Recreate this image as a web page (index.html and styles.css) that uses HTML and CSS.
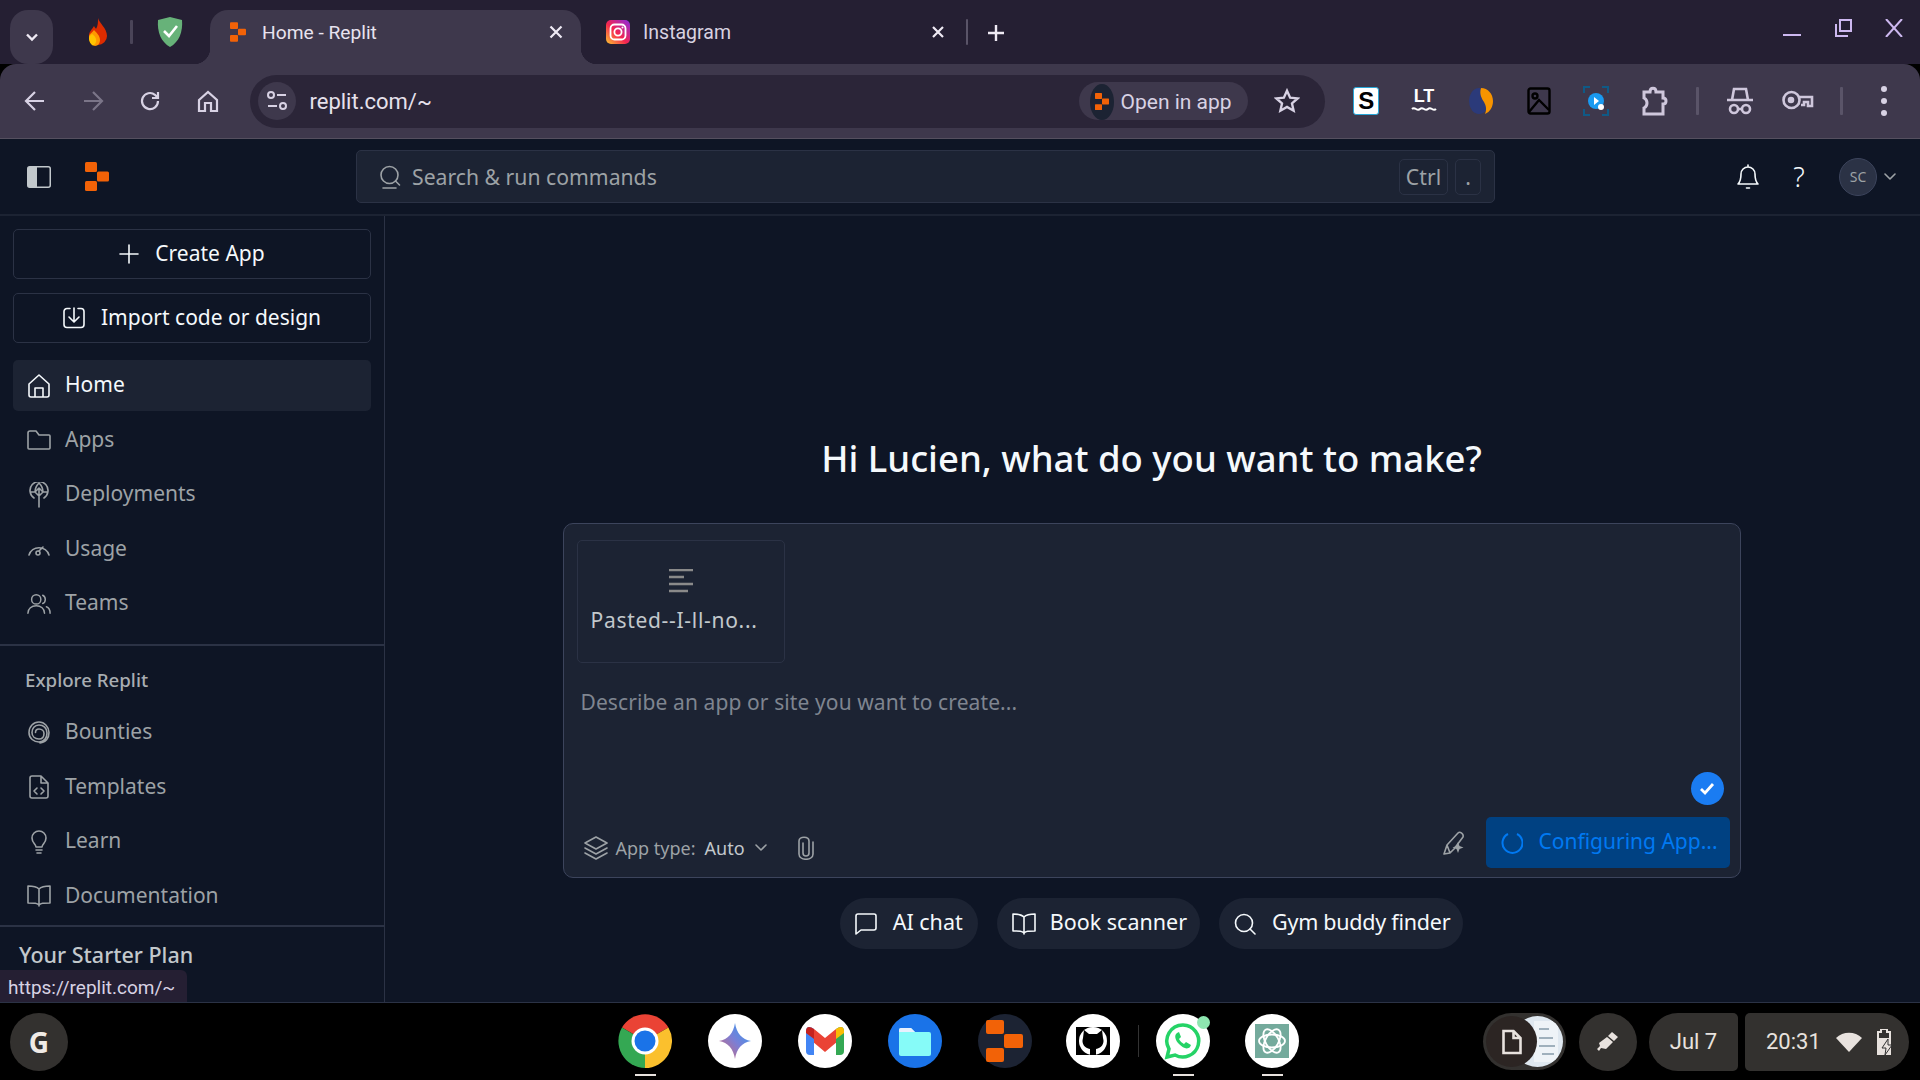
FILE: index.html
```html
<!DOCTYPE html>
<html lang="en">
<head>
<meta charset="utf-8">
<title>Home - Replit</title>
<link rel="stylesheet" href="styles.css">
</head>
<body>
<div class="tabstrip">
  <div class="tabsearch"><svg width="16" height="16" viewBox="0 0 16 16" class="st2"><path d="M3 5.500l5 5 5-5"/></svg></div>
  <div class="pinned first"><svg width="22" height="30" viewBox="0 0 22 30"><path d="M11 1c1 5 9 10 9 18a9 9 0 0 1-18 0c0-5 3-6 5-10 1 2 2 2 2 3 2-3 2-7 2-11z" fill="#dd2c00"/><path d="M7 13c3 3 6 6 6 10 0 3-2 6-5 6-4-1-6-5-6-9 0-3 3-4 5-7z" fill="#ff9800"/><path d="M5 17c3 2 5 5 4 8-1 3-3 4-4 3-2-2-3-4-3-7 0-2 2-3 3-4z" fill="#ffc400"/></svg></div>
  <span class="tabsep"></span>
  <div class="pinned"><svg width="26" height="30" viewBox="0 0 26 30"><path d="M13 0l12 3c1 12-3 22-12 27C4 25 0 15 1 3z" fill="#67b279"/><path d="M7 14l5 5 8-10" fill="none" stroke="#fff" stroke-width="2.600"/></svg></div>
  <div class="tab active">
    <svg width="16" height="22" viewBox="0 0 24 29" class="tabicon"><rect width="12" height="10" rx="1.500" fill="#f26207"/><rect x="12" y="9.500" width="12" height="10" rx="1.500" fill="#f26207"/><rect y="19" width="12" height="10" rx="1.500" fill="#f26207"/></svg>
    <span class="tabtitle">Home - Replit</span>
    <svg width="14" height="14" viewBox="0 0 14 14" class="st2 tabclose"><path d="M1.500 1.500l11 11M12.500 1.500l-11 11"/></svg>
  </div>
  <div class="tab">
    <svg width="24" height="26" viewBox="0 0 24 24" class="tabicon"><defs><linearGradient id="ig" x1="0" y1="1" x2="1" y2="0"><stop offset="0" stop-color="#fdc830"/><stop offset=".45" stop-color="#f5254f"/><stop offset="1" stop-color="#8a2be2"/></linearGradient></defs><rect width="24" height="24" rx="5" fill="url(#ig)"/><rect x="4.500" y="4.500" width="15" height="15" rx="4" fill="none" stroke="#fff" stroke-width="1.800"/><circle cx="12" cy="12" r="3.600" fill="none" stroke="#fff" stroke-width="1.800"/><circle cx="16.500" cy="7.500" r="1" fill="#fff"/></svg>
    <span class="tabtitle dim">Instagram</span>
    <svg width="14" height="14" viewBox="0 0 14 14" class="st2 tabclose"><path d="M2 2l10 10M12 2L2 12"/></svg>
  </div>
  <span class="tabsep narrow"></span>
  <svg width="18" height="18" viewBox="0 0 18 18" class="st2 newtab"><path d="M9 1v16M1 9h16"/></svg>
  <div class="winctl">
    <svg width="18" height="18" viewBox="0 0 18 18" class="wc"><path d="M0 16h18"/></svg>
    <svg width="18" height="18" viewBox="0 0 18 18" class="wc"><rect x="6" y="1" width="11" height="11"/><path d="M2 5v12h12"/></svg>
    <svg width="18" height="18" viewBox="0 0 18 18" class="wc"><path d="M1 0l16 18M17 0L1 18"/></svg>
  </div>
</div>

<div class="toolbar">
  <div class="navbtns">
    <svg width="24" height="24" viewBox="0 0 24 24" class="nv"><path d="M21 12H4M12 3l-9 9 9 9"/></svg>
    <svg width="24" height="24" viewBox="0 0 24 24" class="nv off"><path d="M3 12h17M12 3l9 9-9 9"/></svg>
    <svg width="24" height="24" viewBox="0 0 24 24" class="nv"><path d="M20 12a8 8 0 1 1-3-6.200L20 9M20 3v6h-6"/></svg>
    <svg width="24" height="24" viewBox="0 0 24 24" class="nv"><path d="M3 11l9-8 9 8v11h-6v-8H9v8H3z"/></svg>
  </div>
  <div class="omni">
    <div class="siteinfo"><svg width="22" height="22" viewBox="0 0 22 22" class="nv thin"><circle cx="5" cy="5" r="3"/><path d="M11 5h9M2 16h9"/><circle cx="17" cy="16" r="3"/></svg></div>
    <span class="url">replit.com/~</span>
    <div class="openapp">
      <span class="oa-logo"><svg width="14" height="19" viewBox="0 0 24 29"><rect width="12" height="10" rx="1" fill="#f26207"/><rect x="12" y="9.500" width="12" height="10" rx="1" fill="#f26207"/><rect y="19" width="12" height="10" rx="1" fill="#f26207"/></svg></span>
      <span>Open in app</span>
    </div>
    <svg width="26" height="26" viewBox="0 0 24 24" class="nv star"><path d="M12 2.500l2.900 6.400 6.900.7-5.200 4.600 1.500 6.800L12 17.500 5.900 21l1.500-6.800L2.200 9.600l6.900-.7z"/></svg>
  </div>
  <div class="exts">
    <span class="ext"><span class="ext-s">S</span></span>
    <span class="ext"><svg width="26" height="28" viewBox="0 0 26 28"><text x="13" y="15" text-anchor="middle" class="lt">LT</text><path d="M1 22c3-3 5 3 8 0s5 3 8 0 5 3 8 0" fill="none" stroke="#fff" stroke-width="2"/></svg></span>
    <span class="ext"><svg width="24" height="28" viewBox="0 0 24 28"><ellipse cx="10" cy="14" rx="10" ry="13" fill="#2b3a7a"/><path d="M12 1c7 0 12 6 12 13 0 6-3 11-8 13 2-5 1-8-1-12-2-3-5-8-3-14z" fill="#f79400"/></svg></span>
    <span class="ext"><svg width="24" height="28" viewBox="0 0 24 28" fill="none" stroke="#000" stroke-width="2.400"><rect x="1.500" y="1.500" width="21" height="25" rx="2"/><circle cx="8" cy="9" r="2.500"/><path d="M2 25l10-12 10 10"/></svg></span>
    <span class="ext"><svg width="26" height="30" viewBox="0 0 26 30"><path d="M1 7V1h6M19 1h6v6M25 23v6h-6M7 29H1v-6" fill="none" stroke="#0f5a86" stroke-width="2"/><circle cx="13" cy="15" r="8" fill="#1a9af0"/><path d="M11 11l5 4-5 4z" fill="#fff"/><circle cx="18" cy="21" r="3" fill="#fff"/></svg></span>
    <span class="ext"><svg width="28" height="30" viewBox="0 0 28 30" fill="none" stroke="#cfc7dc" stroke-width="3"><path d="M4 6h6c0-5 6-5 6 0h7v6c4 0 4 6 0 6v10H4v-6c4-2 4-8 0-10z"/></svg></span>
    <span class="toolsep"></span>
    <span class="ext"><svg width="28" height="30" viewBox="0 0 28 30" fill="none" stroke="#cfc7dc" stroke-width="2.600"><path d="M1 14h26M6 14l2-11h12l2 11" /><circle cx="8" cy="23" r="4"/><circle cx="20" cy="23" r="4"/><path d="M12 23h4"/></svg></span>
    <span class="ext"><svg width="32" height="24" viewBox="0 0 32 24" fill="none" stroke="#cfc7dc" stroke-width="2.600"><circle cx="9.500" cy="11" r="8"/><circle cx="9" cy="11" r="2" fill="#cfc7dc"/><path d="M17 8h13v9h-4v-4h-4v3h-3M17 14h1"/></svg></span>
    <span class="toolsep"></span>
    <span class="ext dots"><i></i><i></i><i></i></span>
  </div>
</div>

<div class="app">
  <header class="apphead">
    <svg width="24" height="22" viewBox="0 0 24 22" class="panelicon"><rect x=".75" y=".75" width="22.500" height="20.500" rx="2" fill="none" stroke="#c2c8cc" stroke-width="1.500"/><path d="M2 1h8v20H2a1 1 0 0 1-1-1V2a1 1 0 0 1 1-1z" fill="#c2c8cc"/></svg>
    <svg width="24" height="29" viewBox="0 0 24 29" class="applogo"><rect width="12" height="10" rx="1.500" fill="#f26207"/><rect x="12" y="9.500" width="12" height="10" rx="1.500" fill="#f26207"/><rect y="19" width="12" height="10" rx="1.500" fill="#f26207"/></svg>
    <div class="search">
      <svg width="22" height="24" viewBox="0 0 22 24" class="ln"><circle cx="10.500" cy="10" r="8.500"/><path d="M16.500 16l4 4M4 23h13"/></svg>
      <span class="searchtext">Search &amp; run commands</span>
      <kbd class="key">Ctrl</kbd>
      <kbd class="key dot">.</kbd>
    </div>
    <div class="headright">
      <svg width="24" height="28" viewBox="0 0 24 28" class="ln bell"><path d="M2 21c3-3 3-6 3-10a7 7 0 0 1 14 0c0 4 0 7 3 10zM12 4V2M10.500 25h3"/></svg>
      <span class="help">?</span>
      <span class="avatar">SC</span>
      <svg width="12" height="8" viewBox="0 0 12 8" class="ln chev"><path d="M1 1l5 5 5-5"/></svg>
    </div>
  </header>
  <div class="appbody">
    <aside class="sidebar">
      <div class="sec sec-top">
        <div class="bigbtn"><svg width="20" height="20" viewBox="0 0 20 20" class="ln"><path d="M10 1v18M1 10h18"/></svg><span>Create App</span></div>
        <div class="bigbtn"><svg width="22" height="22" viewBox="0 0 22 22" class="ln"><path d="M7 1.500H4a3 3 0 0 0-3 3v13a3 3 0 0 0 3 3h14a3 3 0 0 0 3-3v-13a3 3 0 0 0-3-3h-3M11 1v13M6 10l5 5 5-5"/></svg><span>Import code or design</span></div>
        <nav class="nav first-nav">
          <a class="item on"><svg width="22" height="24" viewBox="0 0 22 24" class="ln"><path d="M1 10l10-9 10 9v11a2 2 0 0 1-2 2H3a2 2 0 0 1-2-2zM7 23v-9h8v9"/></svg><span>Home</span></a>
          <a class="item"><svg width="24" height="20" viewBox="0 0 24 20" class="ln"><path d="M1 3a2 2 0 0 1 2-2h6l3 4h10a1 1 0 0 1 1 1v12a1 1 0 0 1-1 1H2a1 1 0 0 1-1-1z"/></svg><span>Apps</span></a>
          <a class="item"><svg width="20" height="26" viewBox="0 0 20 26" class="ln"><path d="M5 16a9 9 0 1 1 10 0M1 10h5l4-4 4 4h5M10 25V6M6 10l4 4 4-4M10 1c-3 3-4 5-4 9M10 1c3 3 4 5 4 9"/></svg><span>Deployments</span></a>
          <a class="item"><svg width="24" height="18" viewBox="0 0 24 18" class="ln"><path d="M2 15a10.500 10.500 0 0 1 20 0M12 11l4-4"/><circle cx="11" cy="13" r="2"/></svg><span>Usage</span></a>
          <a class="item"><svg width="26" height="22" viewBox="0 0 26 22" class="ln"><circle cx="10" cy="6" r="5"/><path d="M1 21c0-5 4-8 9-8s9 3 9 8M17 1.500a5 5 0 0 1 0 9M21 14c3 1 4 4 4 7"/></svg><span>Teams</span></a>
        </nav>
      </div>
      <div class="sec sec-explore">
        <div class="seclabel">Explore Replit</div>
        <nav class="nav">
          <a class="item"><svg width="22" height="24" viewBox="0 0 22 24" class="ln"><path d="M12 22c6-.5 9-5 9-10.500S16.500 1 11 1 1 5.500 1 11.500 6 21 11 21s8-4 8-9-3.500-8-8-8-7 3.500-7 7.500 3 6.500 7 6.500 5-3 5-5.500-2-4.500-5-4.500-3.500 2-3.500 3.500"/></svg><span>Bounties</span></a>
          <a class="item"><svg width="20" height="24" viewBox="0 0 20 24" class="ln"><path d="M12 1H3a2 2 0 0 0-2 2v18a2 2 0 0 0 2 2h14a2 2 0 0 0 2-2V8zM12 1v7h7M8 13l-3 3 3 3M12 13l3 3-3 3"/></svg><span>Templates</span></a>
          <a class="item"><svg width="16" height="24" viewBox="0 0 16 24" class="ln"><path d="M5 17c0-3-4-4-4-9a7 7 0 0 1 14 0c0 5-4 6-4 9zM5 20h6M6 23h4"/></svg><span>Learn</span></a>
          <a class="item"><svg width="24" height="22" viewBox="0 0 24 22" class="ln"><path d="M12 4c-2-2-4-3-11-3v17c7 0 9 0 11 2 2-2 4-2 11-2V1c-7 0-9 1-11 3zM12 4v17"/></svg><span>Documentation</span></a>
        </nav>
      </div>
      <div class="plan">Your Starter Plan</div>
    </aside>
    <main class="main">
      <h1 class="title">Hi Lucien, what do you want to make?</h1>
      <section class="card">
        <div class="attach">
          <svg width="24" height="24" viewBox="0 0 24 24" class="lines"><path d="M0 1h24M0 8h15M0 15h24M0 22h19"/></svg>
          <span class="attachname">Pasted--I-ll-no...</span>
        </div>
        <p class="placeholder">Describe an app or site you want to create...</p>
        <span class="check"><svg width="16" height="14" viewBox="0 0 16 14"><path d="M2 7l4 4 8-9" fill="none" stroke="#fff" stroke-width="2.800"/></svg></span>
        <div class="cardfoot">
          <div class="apptype">
            <svg width="24" height="24" viewBox="0 0 24 24" class="ln"><path d="M12 1l11 6-11 6L1 7zM1 12l11 6 11-6M1 17l11 6 11-6"/></svg>
            <span class="atl">App type:</span><span class="atv">Auto</span>
            <svg width="12" height="8" viewBox="0 0 12 8" class="ln"><path d="M1 1l5 5 5-5"/></svg>
            <svg width="16" height="24" viewBox="0 0 16 24" class="ln clip"><path d="M5 7v10c0 4 6 4 6 0V5C11 0 1 0 1 5v13c0 7 14 7 14 0V6"/></svg>
          </div>
          <svg width="24" height="24" viewBox="0 0 24 24" class="ln pen"><path d="M1 23l3-9L15 2c2-2 6 1 5 4L11 18l-4 4zM4 14l3 8"/><path d="M15 11l1.500 4 4 1.500-4 1.500-1.500 4-1.500-4-4-1.500 4-1.500z" fill="#9da2a6" stroke="none"/></svg>
          <div class="configbtn">
            <svg width="22" height="24" viewBox="0 0 22 24" fill="none" stroke="#0079f2" stroke-width="2"><path d="M7 3a10 10 0 1 0 9 0"/></svg>
            <span class="configlabel">Configuring App...</span>
          </div>
        </div>
      </section>
      <div class="chips">
        <span class="chip chip-ai"><svg width="22" height="22" viewBox="0 0 22 22" class="ln"><path d="M1 3a2 2 0 0 1 2-2h16a2 2 0 0 1 2 2v12a2 2 0 0 1-2 2H6l-5 4z"/></svg><span class="chiplabel">AI chat</span></span>
        <span class="chip chip-book"><svg width="24" height="22" viewBox="0 0 24 22" class="ln"><path d="M12 4c-2-2-4-3-11-3v17c7 0 9 0 11 2 2-2 4-2 11-2V1c-7 0-9 1-11 3zM12 4v17"/></svg><span class="chiplabel">Book scanner</span></span>
        <span class="chip tight"><svg width="22" height="22" viewBox="0 0 22 22" class="ln"><circle cx="10" cy="10" r="8.500"/><path d="M16 16l5 5"/></svg><span class="chiplabel">Gym buddy finder</span></span>
      </div>
    </main>
  </div>
  <div class="status">https://replit.com/~</div>
</div>

<footer class="shelf">
  <div class="launcher"><span>G</span></div>
  <div class="apps">
    <span class="appi"><svg width="54" height="54" viewBox="0 0 54 54"><path d="M27 27L4 13.500A27 27 0 0 1 50.400 13.500z" fill="#ea4335"/><path d="M27 27L50.400 13.500A27 27 0 0 1 27 54z" fill="#fbc02d"/><path d="M27 27L27 54A27 27 0 0 1 4 13.500z" fill="#34a853"/><circle cx="27" cy="27" r="13.500" fill="#fff"/><circle cx="27" cy="27" r="10.500" fill="#1a73e8"/></svg><i class="run"></i></span>
    <span class="appi"><svg width="54" height="54" viewBox="0 0 54 54"><defs><linearGradient id="gem" x1="0" y1="1" x2="1" y2="0"><stop offset="0" stop-color="#d96570"/><stop offset=".5" stop-color="#7a7fd6"/><stop offset="1" stop-color="#2a9df4"/></linearGradient></defs><circle cx="27" cy="27" r="27" fill="#fff"/><path d="M27 9c1.500 10 7 16.500 16 18-9 1.500-14.500 8-16 18-1.500-10-7-16.500-16-18 9-1.500 14.500-8 16-18z" fill="url(#gem)"/></svg></span>
    <span class="appi"><svg width="54" height="54" viewBox="0 0 54 54"><circle cx="27" cy="27" r="27" fill="#fff"/><path d="M8 18l8 6 11 9 11-9 8-6v4L27 38 8 22z" fill="#ea4335"/><path d="M8 17c0-5 4-5 8-2v26h-4a4 4 0 0 1-4-4z" fill="#4285f4"/><path d="M46 17c0-5-4-5-8-2v26h4a4 4 0 0 0 4-4z" fill="#34a853"/><path d="M8 17c0-5 4-5 8-2v10l-8-6z" fill="#c5221f"/><path d="M46 17c0-5-4-5-8-2v10l8-6z" fill="#fbbc04"/><path d="M16 15l11 9 11-9v10l-11 9-11-9z" fill="#ea4335"/></svg></span>
    <span class="appi"><svg width="54" height="54" viewBox="0 0 54 54"><circle cx="27" cy="27" r="27" fill="#1a73e8"/><path d="M11 16a2 2 0 0 1 2-2h10l4 4h14a2 2 0 0 1 2 2v20a2 2 0 0 1-2 2H13a2 2 0 0 1-2-2z" fill="#86fbf8"/><path d="M11 16a2 2 0 0 1 2-2h10l4 4h-16z" fill="#e8f0fe"/></svg></span>
    <span class="appi"><svg width="54" height="54" viewBox="0 0 54 54"><circle cx="27" cy="27" r="27" fill="#1c2333"/><rect x="8" y="6" width="18" height="14" rx="2" fill="#f26207"/><rect x="26" y="20" width="19" height="14" rx="2" fill="#f26207"/><rect x="8" y="34" width="18" height="14" rx="2" fill="#f26207"/></svg></span>
    <span class="appi"><svg width="54" height="54" viewBox="0 0 54 54"><circle cx="27" cy="27" r="27" fill="#fff"/><rect x="10" y="13" width="34" height="28" fill="#000"/><circle cx="27" cy="27" r="14" fill="#fff"/><path d="M18 16l5 4h8l5-4 1 8c2 6-2 10-7 11v6h-6v-6c-5-1-9-5-7-11z" fill="#000"/></svg></span>
    <span class="appsep"></span>
    <span class="appi"><svg width="54" height="54" viewBox="0 0 54 54"><circle cx="27" cy="27" r="27" fill="#fff"/><path d="M27 11a16 16 0 0 0-14 24l-2 8 8-2a16 16 0 1 0 8-30z" fill="none" stroke="#25d366" stroke-width="3.500"/><path d="M21 19c-3 2-2 7 2 11s8 6 11 3l1-2-5-3-2 2c-2-1-4-3-5-5l2-2-2-5z" fill="#25d366"/></svg><i class="notif"></i><i class="run"></i></span>
    <span class="appi"><svg width="54" height="54" viewBox="0 0 54 54"><circle cx="27" cy="27" r="27" fill="#fff"/><rect x="10" y="10" width="34" height="34" fill="#74aa9c"/><g fill="none" stroke="#fff" stroke-width="1.800"><ellipse cx="27" cy="27" rx="13" ry="6.500"/><ellipse cx="27" cy="27" rx="13" ry="6.500" transform="rotate(60 27 27)"/><ellipse cx="27" cy="27" rx="13" ry="6.500" transform="rotate(120 27 27)"/></g></svg><i class="run"></i></span>
  </div>
  <div class="tray">
    <div class="holding"><span class="hold-doc"><svg width="20" height="26" viewBox="0 0 20 26"><path d="M1.500 2h10l7 7v15h-17zM11.500 2v7h7" fill="none" stroke="#e8e2de" stroke-width="2.600"/></svg></span><span class="hold-img"><svg width="51" height="51" viewBox="0 0 51 51"><rect x="22" y="5" width="24" height="41" fill="#eef3f7"/><path d="M27 13h10M27 22h14M27 30h16M30 38h12" stroke="#9fb0bc" stroke-width="2"/></svg></span></div>
    <div class="penbtn"><svg width="24" height="24" viewBox="0 0 24 24"><path d="M16 2l6 5-4 4-6-5zM11 7l6 5-7 7-5-1-2 3-2-2 3-3-1-3z" fill="#e8e2de"/></svg></div>
    <div class="date">Jul 7</div>
    <div class="clock"><span>20:31</span>
      <svg width="26" height="20" viewBox="0 0 26 20"><path d="M0 6c7-7 19-7 26 0L13 20z" fill="#e8e2de"/></svg>
      <svg width="16" height="26" viewBox="0 0 16 26"><path d="M4 0h6v3h3v23H1V3h3z" fill="none" stroke="#e8e2de" stroke-width="2"/><path d="M1 9h12v17H1z" fill="#e8e2de"/><path d="M11 10l-6 9h4l-1 7 7-10h-4z" fill="#e8e2de" stroke="#323232"/></svg>
    </div>
  </div>
</footer>
</body>
</html>
```
FILE: styles.css
```css
* { box-sizing: border-box; }
html, body { margin: 0; padding: 0; width: 1920px; height: 1080px; overflow: hidden; }
body { display: flex; flex-direction: column; background: #000; font-family: "Noto Sans", sans-serif; color: #f5f9fc; }
svg { display: block; flex: none; }

.st2 { fill: none; stroke: #efeaf4; stroke-width: 2.400; }
.ln { fill: none; stroke: currentColor; stroke-width: 1.600; stroke-linejoin: round; stroke-linecap: round; }

.tabstrip { height: 64px; flex: none; background: #251f33; display: flex; align-items: flex-start; position: relative; padding-top: 10px; font-family: Roboto, sans-serif; }
.tabsearch { margin-left: 10px; width: 43px; height: 54px; border-radius: 18px; background: #3e384c; display: flex; align-items: center; justify-content: center; }
.pinned { height: 44px; display: flex; align-items: center; }
.pinned.first { margin-left: 34px; }
.tabsep { width: 3px; height: 24px; background: #4a4458; margin: 10px 24px 0 21px; border-radius: 1px; }
.tab { position: relative; width: 371px; height: 54px; margin-left: 27px; display: flex; align-items: center; padding: 0 18px 10px 20px; font-size: 19.200px; color: #e8e3ef; }
.tab + .tab { margin-left: 0; width: 385px; padding-left: 25px; padding-right: 21px; font-size: 19.500px; }
.tab.active { background: #3e384c; border-radius: 18px 18px 0 0; }
.tab.active::before, .tab.active::after { content: ""; position: absolute; bottom: 0; width: 16px; height: 16px; }
.tab.active::before { left: -16px; background: radial-gradient(circle at 0 0, transparent 16px, #3e384c 16.500px); }
.tab.active::after { right: -16px; background: radial-gradient(circle at 100% 0, transparent 16px, #3e384c 16.500px); }
.tabicon { margin-right: 16px; }
.tab + .tab .tabicon { margin-right: 13px; }
.tabtitle { flex: 1; }
.tabtitle.dim { color: #d8d2e0; }
.tab .st2 { stroke-width: 2.200; }
.tabclose { flex: none; }
.tabsep.narrow { width: 2px; height: 26px; margin: 9px 19px 0 0; background: #5a5468; }
.newtab { margin: 14px 0 0 0; }
.winctl { margin-left: auto; display: flex; gap: 33px; padding: 9px 17px 0 0; }
.wc { fill: none; stroke: #cdb8f0; stroke-width: 2; }

.toolbar { height: 75px; flex: none; background: #3e384c; border-radius: 16px 16px 0 0; border-bottom: 1px solid #55505f; display: flex; align-items: center; padding-left: 23px; font-family: Roboto, sans-serif; position: relative; }
.navbtns { display: flex; gap: 33.500px; }
.nv { fill: none; stroke: #d8d2e4; stroke-width: 2.200; }
.nv.off { stroke: #7b7588; }
.nv.thin { stroke-width: 2; }
.omni { margin-left: 30px; width: 1075px; height: 53px; background: #2b2538; border-radius: 27px; display: flex; align-items: center; padding: 0 25px 0 8px; }
.siteinfo { width: 38px; height: 38px; border-radius: 50%; background: #3e384c; display: flex; align-items: center; justify-content: center; }
.url { margin-left: 14px; font-size: 22px; color: #e6e1ec; flex: 1; padding-top: 1px; }
.openapp { width: 169px; height: 38px; border-radius: 19px; background: #3e384c; display: flex; align-items: center; gap: 7px; padding: 1px 0 0 11px; font-size: 21px; color: #d8d2e4; }
.oa-logo { width: 24px; height: 36px; border-radius: 50%; background: #1c2333; display: flex; align-items: center; justify-content: center; }
.star { margin-left: 26px; }
.exts { margin-left: 13px; display: flex; align-items: center; }
.ext { width: 57.500px; display: flex; justify-content: center; align-items: center; }
.ext-s { width: 26px; height: 28px; background: #fff; border: 1px solid #27a7d8; border-radius: 3px; color: #000; font: 900 24px/26px "Liberation Sans", sans-serif; text-align: center; }
.lt { font: 700 18px "Liberation Sans", sans-serif; fill: #fff; }
.toolsep { width: 3px; height: 28px; background: #5a5468; margin: 0 13px; border-radius: 1px; }
.dots { flex-direction: column; gap: 6px; }
.dots i { width: 6px; height: 6px; border-radius: 50%; background: #d8d2e4; }

.app { flex: 1; min-height: 0; display: flex; flex-direction: column; background: #0e1525; position: relative; border-bottom: 1px solid #2b3245; }
.apphead { height: 77px; flex: none; border-bottom: 2px solid #1c2333; display: flex; align-items: center; padding-left: 27px; }
.applogo { margin-left: 34px; }
.search { margin-left: 247px; width: 1139px; height: 53px; flex: none; background: #1c2333; border: 1px solid #2b3245; border-radius: 5px; display: flex; align-items: center; padding: 0 13px 0 22px; color: #9da2a6; font-size: 21.200px; }
.searchtext { margin-left: 11px; flex: 1; }
.key { font: inherit; height: 36px; width: 49px; border: 1px solid #2b3245; border-radius: 5px; display: flex; align-items: center; justify-content: center; }
.key.dot { width: 26px; margin-left: 7px; }
.headright { display: flex; align-items: center; color: #f5f9fc; margin-left: 241px; }
.help { font-size: 27px; line-height: 28px; width: 28px; text-align: center; margin-left: 25px; font-weight: 300; }
.avatar { margin-left: 26px; width: 38px; height: 38px; border-radius: 50%; background: #2b3245; border: 1px solid #3c445c; color: #9da2a6; font-size: 14px; display: flex; align-items: center; justify-content: center; }
.chev { margin-left: 7px; color: #9da2a6; }

.appbody { flex: 1; min-height: 0; display: flex; }
.sidebar { width: 385px; flex: none; border-right: 1px solid #2b3245; display: flex; flex-direction: column; overflow: hidden; }
.sec-top { padding: 13px 13px 15px; border-bottom: 2px solid #2b3245; display: flex; flex-direction: column; gap: 14px; }
.bigbtn { height: 50px; border: 1px solid #2b3245; border-radius: 5px; display: flex; align-items: center; justify-content: center; gap: 16px; font-size: 21px; }
.bigbtn span { margin-top: -2px; }
.nav { display: flex; flex-direction: column; gap: 3.500px; }
.first-nav { margin-top: 3px; }
.item { height: 51px; border-radius: 5px; display: flex; align-items: center; font-size: 21px; color: #9da2a6; padding-left: 14px; position: relative; }
.item span { margin-top: -3px; }
.item svg { width: 24px; margin-right: 14px; }
.item.on { background: #1c2333; color: #f5f9fc; }
.sec-explore { padding: 0 13px 3px; border-bottom: 2px solid #2b3245; }
.seclabel { height: 61px; display: flex; align-items: center; padding: 5px 0 0 12px; font-size: 18.700px; font-weight: 500; color: #a8adb2; }
.plan { padding: 14px 19px; font-size: 21.500px; font-weight: 500; color: #c2c8cc; line-height: 28px; }

.main { flex: 1; display: flex; flex-direction: column; align-items: center; padding: 218px 2px 0 0; }
.title { margin: 0; font-size: 36.500px; line-height: 48px; font-weight: 500; color: #f5f9fc; }
.card { position: relative; margin-top: 41px; width: 1178px; height: 355px; flex: none; background: #1c2333; border: 1px solid #3c445c; border-radius: 10px; padding: 16px 10px 9px 13px; display: flex; flex-direction: column; }
.attach { width: 208px; height: 123px; border: 1px solid #2b3245; border-radius: 5px; display: flex; flex-direction: column; align-items: center; padding-top: 28px; gap: 13px; font-size: 21px; color: #c2c8cc; }
.attachname { align-self: flex-start; margin-left: 13px; letter-spacing: .7px; }
.lines { fill: none; stroke: #8a8a8a; stroke-width: 2.600; }
.placeholder { margin: 25px 0 0 4px; font-size: 21px; line-height: 28px; color: #7f8590; letter-spacing: .1px; }
.check { position: absolute; right: 16px; bottom: 72px; width: 33px; height: 33px; border-radius: 50%; background: #1a7cf2; display: flex; align-items: center; justify-content: center; }
.cardfoot { margin-top: auto; display: flex; align-items: center; }
.apptype { display: flex; align-items: center; font-size: 18px; color: #9da2a6; padding: 10px 0 0 7px; flex: 1; }
.atl { margin-left: 8px; }
.atv { margin-left: 9px; color: #c2c8cc; margin-right: 10px; }
.clip { margin-left: 31px; }
.pen { margin-right: 19px; color: #9da2a6; }
.configbtn { width: 244px; height: 51px; background: #004182; border-radius: 5px; display: flex; align-items: center; gap: 16px; padding-left: 15px; color: #0079f2; font-size: 21px; }
.configlabel { margin-top: -3px; }

.chips { margin-top: 20px; display: flex; gap: 19px; }
.chip { height: 51px; border-radius: 26px; background: #1c2333; display: flex; align-items: center; gap: 16px; padding: 0 13px 0 15px; font-size: 21.500px; color: #f5f9fc; }
.chip-ai { padding-right: 15px; }
.chip-book { gap: 14px; }
.chiplabel { margin-top: -4px; }
.chip.tight { letter-spacing: -.25px; }

.status { position: absolute; left: 0; bottom: 0; height: 32px; width: 187px; background: #251f33; border-radius: 0 6px 0 0; padding-left: 8px; font: 19px/36px Roboto, sans-serif; color: #d8d2e4; }

.shelf { height: 77px; flex: none; background: #000; display: flex; align-items: center; position: relative; font-family: Roboto, sans-serif; }
.launcher { margin-left: 10px; width: 58px; height: 58px; border-radius: 50%; background: #33312f; display: flex; align-items: center; justify-content: center; font: 700 28px "Noto Sans", sans-serif; color: #f0ebe6; }
.apps { display: flex; align-items: center; margin: -2px 0 0 550px; gap: 36px; }
.appi { width: 54px; height: 54px; position: relative; }
.appi:nth-child(6) { margin-left: -2.500px; }
.appi:nth-child(8), .appi:nth-child(9) { margin-left: -1px; }
.appsep { width: 1px; height: 32px; background: #333; margin: 0 -18px; }
.run { position: absolute; left: 17px; bottom: -8px; width: 21px; height: 2px; background: #e8e2de; }
.notif { position: absolute; right: 0; top: 2px; width: 13px; height: 13px; border-radius: 50%; background: #8ee6b0; }
.tray { margin-left: auto; margin-right: 11px; display: flex; align-items: center; color: #e8e2de; font-size: 22px; }
.holding { width: 83px; height: 57px; border-radius: 29px; background: #33312f; position: relative; overflow: hidden; }
.hold-doc { position: absolute; left: 3px; top: 3px; width: 51px; height: 51px; border-radius: 50%; background: #2c2523; display: flex; align-items: center; justify-content: center; z-index: 1; }
.hold-img { position: absolute; right: 3px; top: 3px; width: 51px; height: 51px; border-radius: 50%; background: #dfe8f0; overflow: hidden; }
.penbtn { margin-left: 13px; width: 58px; height: 58px; border-radius: 50%; background: #33312f; display: flex; align-items: center; justify-content: center; }
.date { margin-left: 12px; width: 89px; height: 58px; background: #33312f; border-radius: 29px 5px 5px 29px; display: flex; align-items: center; justify-content: center; }
.clock { margin-left: 7px; width: 164px; height: 58px; background: #33312f; border-radius: 5px 29px 29px 5px; display: flex; align-items: center; gap: 15px; padding-left: 21px; }
```
